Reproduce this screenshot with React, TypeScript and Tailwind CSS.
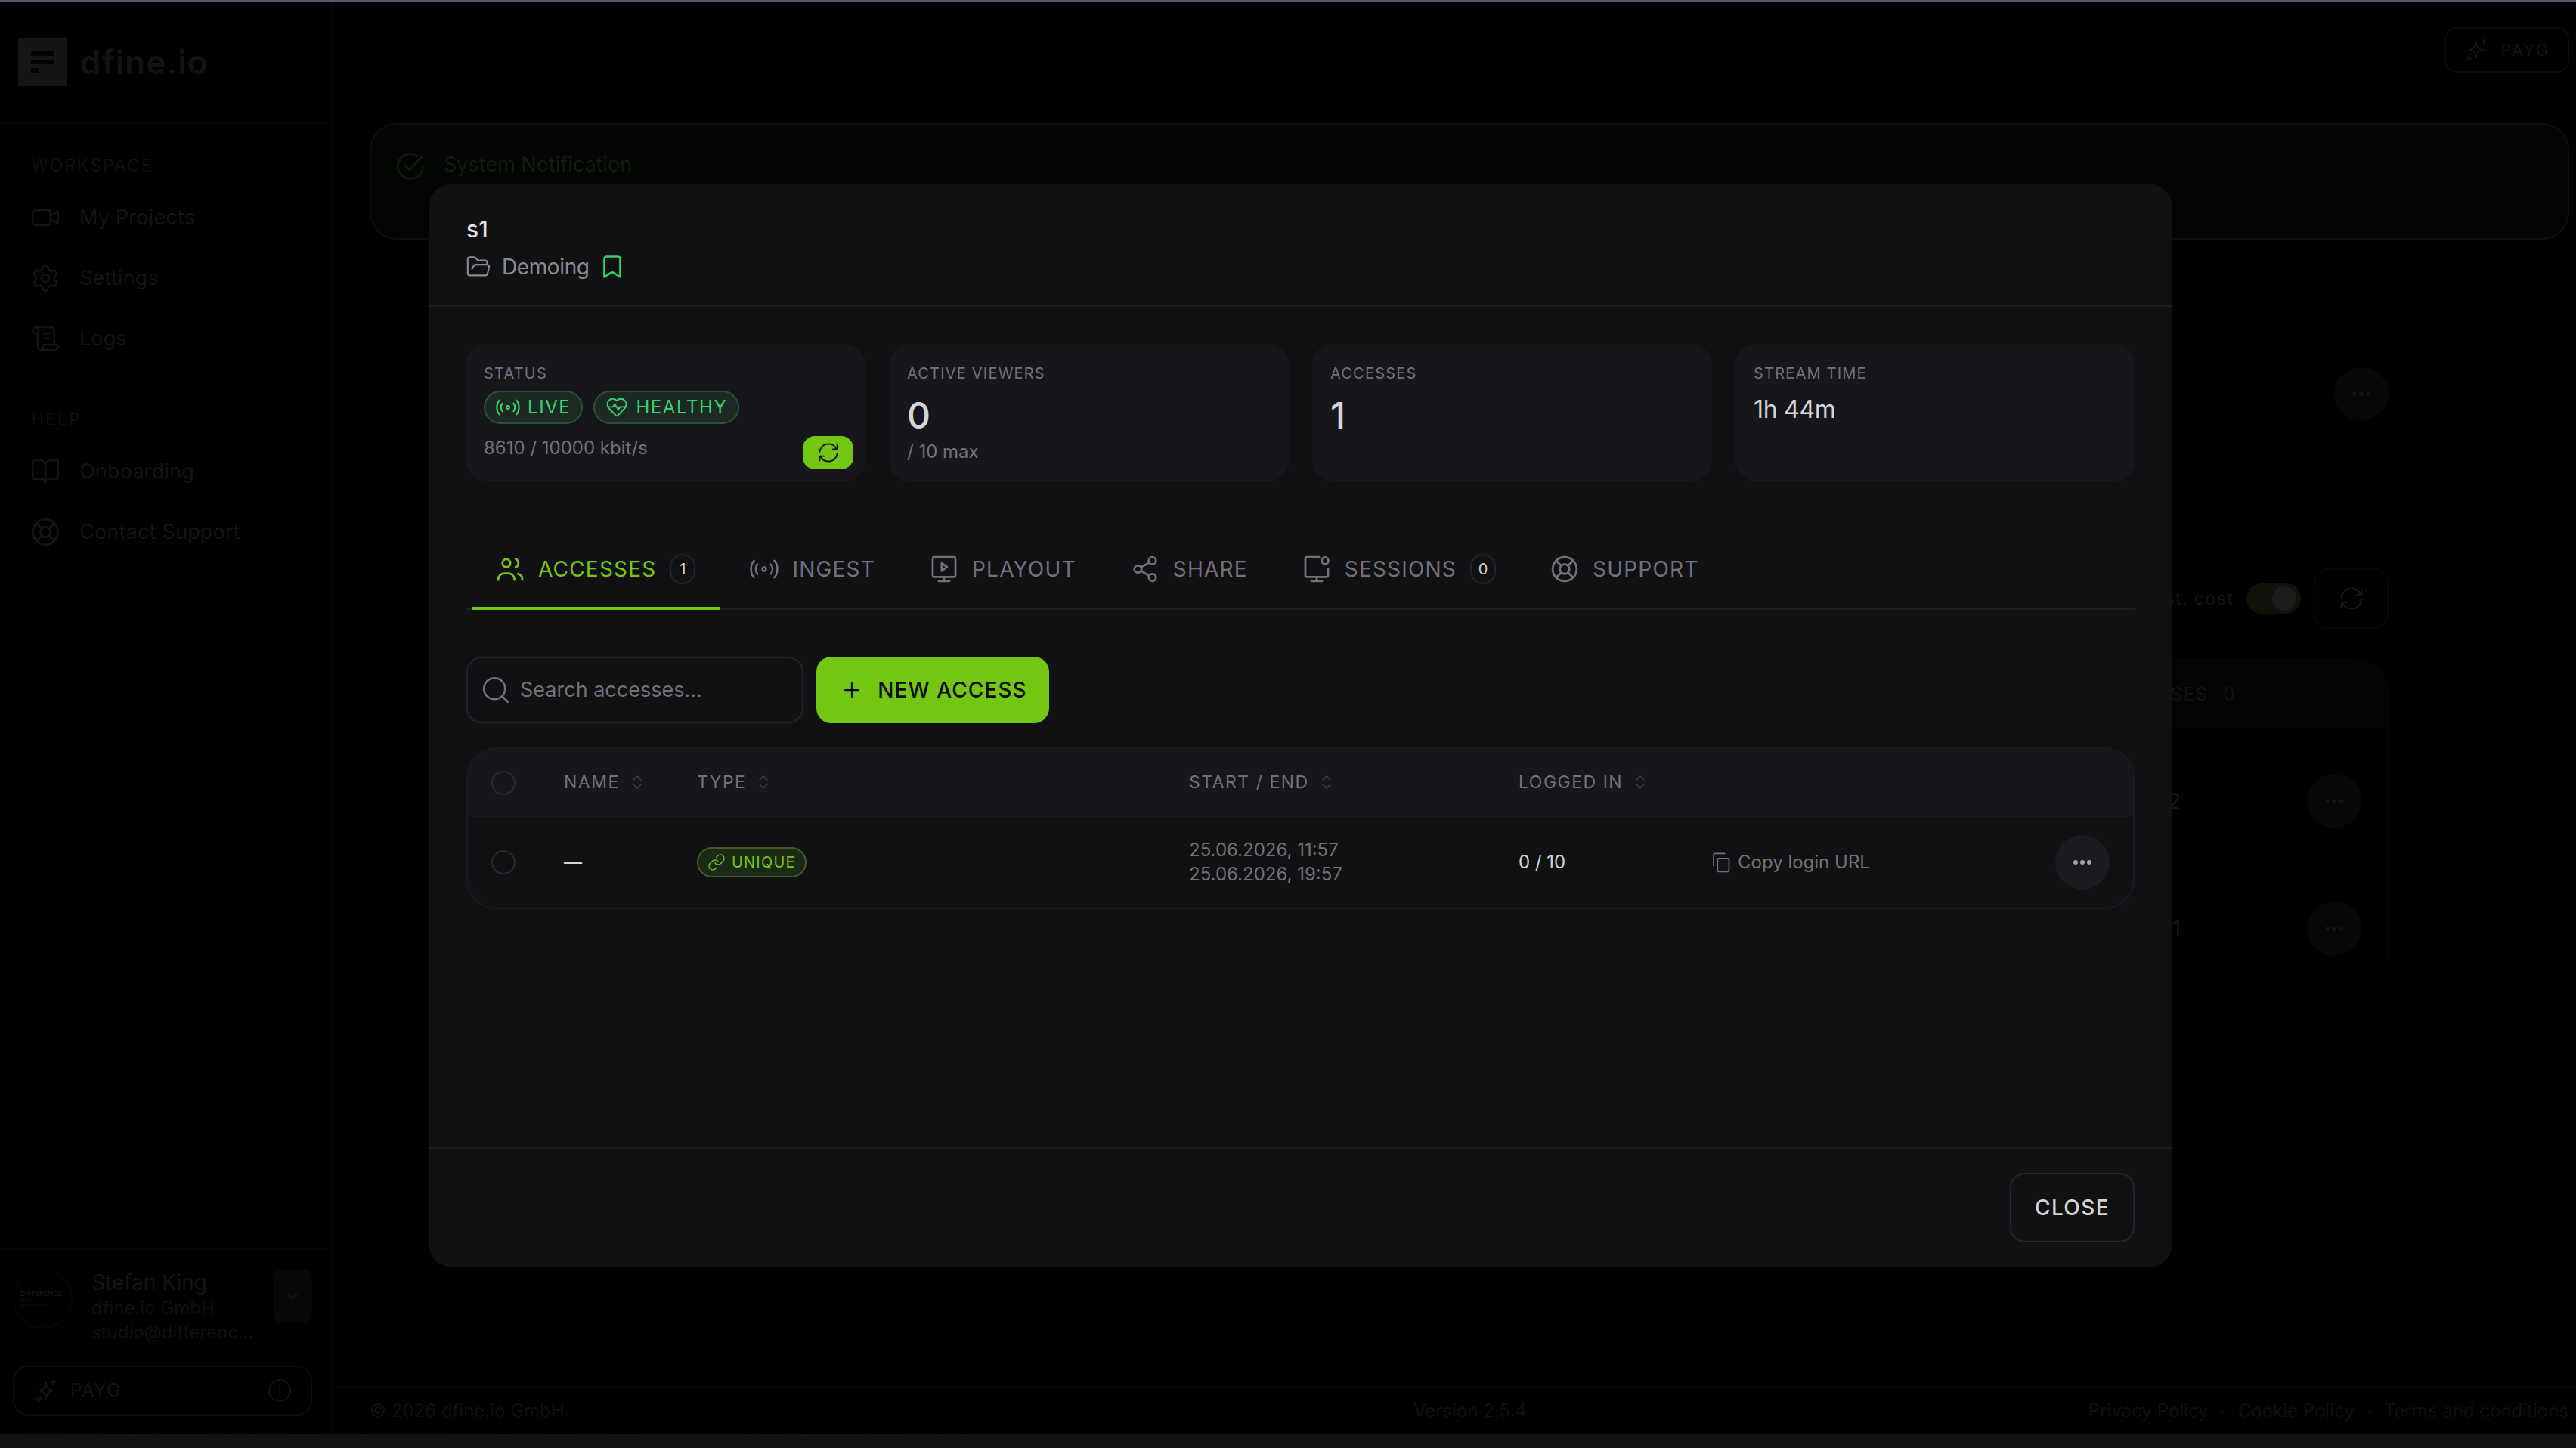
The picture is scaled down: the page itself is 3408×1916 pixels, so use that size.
import type { ReactNode } from "react";
import { BookOpen, ChevronDown, ChevronsUpDown, FolderOpen, Link, ScrollText, Settings, Video } from "lucide-react";

function Ico({ className, children, sw = 1.5 }: { className?: string; children: ReactNode; sw?: number }) {
  return (
    <svg viewBox="0 0 24 24" fill="none" stroke="currentColor" strokeWidth={sw} strokeLinecap="round" strokeLinejoin="round" className={className}>
      {children}
    </svg>
  );
}

const UsersIcon = ({ className }: { className?: string }) => (
  <Ico className={className} sw={1.75}>
    <circle cx="8.800" cy="7" r="3.300" />
    <path d="M16.500 3.500a3.800 3.800 0 0 1 0 7" />
    <path d="M2 21v-.5a5 5 0 0 1 5-5h3.500a5 5 0 0 1 5 5v.5" />
    <path d="M18.500 16a4.200 4.200 0 0 1 3.500 5" />
  </Ico>
);
const AntennaIcon = ({ className }: { className?: string }) => (
  <Ico className={className} sw={1.6}>
    <path d="M17.500 8s1.500 1.500 1.500 4-1.500 4-1.500 4" />
    <path d="M20.500 5s2.500 2.500 2.500 7-2.500 7-2.500 7" />
    <path d="M6.500 8S5 9.500 5 12s1.500 4 1.500 4" />
    <path d="M3.500 5S1 7.500 1 12s2.500 7 2.500 7" />
    <circle cx="12" cy="12" r="1.500" />
  </Ico>
);
const PlayoutIcon = ({ className }: { className?: string }) => (
  <Ico className={className} sw={1.75}>
    <rect x="2.500" y="2" width="19" height="16.500" rx="1.500" />
    <path d="M12 18.500v3M7.500 22h9" />
    <path d="M10 7v6.500l4.500-3.250z" />
  </Ico>
);
const ShareIcon = ({ className }: { className?: string }) => (
  <Ico className={className} sw={1.75}>
    <circle cx="18" cy="19" r="3" />
    <circle cx="18" cy="5" r="3" />
    <circle cx="6" cy="12" r="3" />
    <path d="M15.500 6.500l-7 4M8.500 13.500l7 4" />
  </Ico>
);
const SessionsIcon = ({ className }: { className?: string }) => (
  <Ico className={className} sw={1.75}>
    <path d="M14 2H4a1.500 1.500 0 0 0-1.500 1.500v13.500A1.500 1.500 0 0 0 4 18.500h16a1.500 1.500 0 0 0 1.500-1.500v-5" />
    <circle cx="19" cy="5" r="2.800" />
    <path d="M12 18.500v3M7.500 22h9" />
  </Ico>
);
const LifebeltIcon = ({ className }: { className?: string }) => (
  <Ico className={className} sw={1.75}>
    <circle cx="12" cy="12" r="10" />
    <circle cx="12" cy="12" r="4" />
    <path d="M9.200 9.200L4.900 4.900M14.800 9.200l4.300-4.300M9.200 14.800l-4.300 4.300M14.800 14.800l4.300 4.300" />
  </Ico>
);
const RefreshIcon = ({ className }: { className?: string }) => (
  <Ico className={className}>
    <path d="M21.170 8A10 10 0 0 0 12 2a10 10 0 0 0-9.950 9" />
    <path d="M17 8h4.400a.6.6 0 0 0 .6-.6V3" />
    <path d="M2.880 16a10 10 0 0 0 9.170 6A10 10 0 0 0 22 13" />
    <path d="M7.050 16H2.650a.6.6 0 0 0-.6.6V21" />
  </Ico>
);
const HeartPulseIcon = ({ className }: { className?: string }) => (
  <Ico className={className}>
    <path d="M22 8.860c0 1.550-.6 3.030-1.650 4.130-2.450 2.530-4.810 5.170-7.340 7.610-.58.55-1.500.53-2.060-.05L3.650 12.990c-2.200-2.280-2.200-5.970 0-8.260 2.230-2.310 5.860-2.310 8.080 0l.27.28.26-.28C13.330 3.620 14.790 3 16.310 3s2.970.62 4.040 1.730C21.410 5.830 22 7.320 22 8.860z" />
    <path d="M2.500 11.500H8l2-3 3.500 6 2-3h6" />
  </Ico>
);
const SparksIcon = ({ className }: { className?: string }) => (
  <Ico className={className}>
    <path d="M12 4c0 5 2.500 7.500 7 8-4.500.5-7 3-7 8-.5-5-3-7.500-7-8 4-.5 6.500-3 7-8z" />
    <path d="M19.500 2v4M17.500 4h4" />
    <circle cx="5" cy="20.500" r="1.600" />
  </Ico>
);
const CopyIcon = ({ className }: { className?: string }) => (
  <Ico className={className}>
    <rect x="8" y="7.500" width="13" height="15" rx="1.500" />
    <path d="M3.500 16V3.500a1.500 1.500 0 0 1 1.500-1.500h11" />
  </Ico>
);

const tabs = [
  { label: "ACCESSES", icon: UsersIcon, count: "1", active: true },
  { label: "INGEST", icon: AntennaIcon },
  { label: "PLAYOUT", icon: PlayoutIcon },
  { label: "SHARE", icon: ShareIcon },
  { label: "SESSIONS", icon: SessionsIcon, count: "0" },
  { label: "SUPPORT", icon: LifebeltIcon },
];

const Dots = ({ color }: { color: string }) => (
  <span className={`flex gap-[3px] ${color}`}>
    <span className="w-[6px] h-[6px] rounded-full bg-current" />
    <span className="w-[6px] h-[6px] rounded-full bg-current" />
    <span className="w-[6px] h-[6px] rounded-full bg-current" />
  </span>
);

function NavItem({ icon, label }: { icon: ReactNode; label: string }) {
  return (
    <div className="h-[80px] flex items-center gap-[25px] pl-[40px] text-[27px] tracking-[0.2px] text-[#141414]">
      {icon}
      <span>{label}</span>
    </div>
  );
}

function Sidebar() {
  return (
    <aside className="w-[440px] shrink-0 flex flex-col border-r-2 border-[#050505]">
      <div className="h-[162px] border-b-2 border-[#050505] flex items-start pl-[24px] pt-[48px] gap-[18px]">
        <div className="w-[64px] h-[64px] bg-[#141516] flex flex-col gap-[5px] items-start justify-center pl-[17px]">
          <span className="w-[30px] h-[6px] bg-[#030303]" />
          <span className="w-[30px] h-[6px] bg-[#030303]" />
          <span className="w-[10px] h-[6px] bg-[#030303]" />
        </div>
        <span className="text-[44px] leading-[64px] font-semibold text-[#131313] tracking-[1px]">dfine.io</span>
      </div>
      <div className="pt-[39px]">
        <div className="pl-[41px] text-[23px] leading-[32px] tracking-[2px] text-[#101010]">WORKSPACE</div>
        <div className="mt-[13px]">
          <NavItem icon={<Video className="w-[40px] h-[40px]" strokeWidth={1.5} />} label="My Projects" />
          <NavItem icon={<Settings className="w-[40px] h-[40px]" strokeWidth={1.5} />} label="Settings" />
          <NavItem icon={<ScrollText className="w-[40px] h-[40px]" strokeWidth={1.5} />} label="Logs" />
        </div>
        <div className="mt-[51px] pl-[41px] text-[23px] leading-[32px] tracking-[2px] text-[#101010]">HELP</div>
        <div className="mt-[13px]">
          <NavItem icon={<BookOpen className="w-[40px] h-[40px]" strokeWidth={1.5} />} label="Onboarding" />
          <NavItem icon={<LifebeltIcon className="w-[40px] h-[40px]" />} label="Contact Support" />
        </div>
      </div>
      <div className="mt-auto border-t-2 border-[#050505] pt-[25px] pl-[17px] pr-[25px] pb-[25px]">
        <div className="flex items-start">
          <div className="w-[79px] h-[79px] shrink-0 rounded-full border-2 border-[#060606] flex flex-col items-start justify-center pl-[8px] text-[#1a1a1a]">
            <span className="text-[9px] leading-[12px]">DIFFERENCE</span>
            <span className="text-[5px] leading-[7px] text-[#111111]">DIGITAL</span>
            <span className="text-[5px] leading-[7px] text-[#111111]">INTERMEDIATE</span>
          </div>
          <div className="ml-[25px] w-[200px] text-[#151515]">
            <div className="text-[28px] leading-[36px]">Stefan King</div>
            <div className="text-[24px] leading-[32px] text-[#101010]">dfine.io GmbH</div>
            <div className="text-[24px] leading-[32px] text-[#101010] whitespace-nowrap">studio@differenc...</div>
          </div>
          <div className="ml-auto w-[52px] h-[71px] rounded-[12px] bg-[#07080a] flex items-center justify-center text-[#151515]">
            <ChevronDown className="w-[24px] h-[24px]" />
          </div>
        </div>
        <div className="mt-[28px] h-[66px] rounded-[20px] border-2 border-[#0c0d06] flex items-center pl-[26px] pr-[26px] text-[#14160a]">
          <SparksIcon className="w-[32px] h-[32px]" />
          <span className="ml-[16px] text-[24px] tracking-[1.5px]">PAYG</span>
          <span className="ml-auto w-[30px] h-[30px] rounded-full border-2 border-current flex items-center justify-center text-[18px]">i</span>
        </div>
      </div>
    </aside>
  );
}

function Background() {
  return (
    <div className="h-[1896px] flex">
      <Sidebar />
      <main className="flex-1 min-w-0 flex flex-col">
        <header className="h-[128px] shrink-0 border-b-2 border-[#050505] flex justify-end pr-[9px] pt-[34px]">
          <div className="w-[165px] h-[60px] rounded-[16px] border-2 border-[#0c0d06] flex items-center justify-center gap-[16px] text-[#14160a]">
            <SparksIcon className="w-[32px] h-[32px]" />
            <span className="text-[22px] tracking-[2px]">PAYG</span>
          </div>
        </header>
        <div className="flex-1 min-h-0 pl-[49px] pr-[9px] pt-[33px]">
          <div className="h-[154px] rounded-[36px] border-2 border-[#0a120a] bg-[#020502] pt-[33px] pl-[30px] flex items-start gap-[22px]">
            <svg viewBox="0 0 24 24" fill="none" stroke="#0f1a0f" strokeWidth="1.5" strokeLinecap="round" strokeLinejoin="round" className="w-[44px] h-[44px]">
              <path d="M21 12a9 9 0 1 1-4-7.500" />
              <path d="M8 11.500l3 3 9-9" />
            </svg>
            <span className="text-[27px] leading-[40px] text-[#121c12]">System Notification</span>
          </div>
          <div className="pr-[239px]">
            <div className="mt-[169px] flex justify-end">
              <div className="w-[72px] h-[70px] rounded-full bg-[#070707] flex items-center justify-center">
                <Dots color="text-[#131313]" />
              </div>
            </div>
            <div className="mt-[196px] flex items-center justify-end gap-[17px]">
              <span className="text-[24px] tracking-[1px] text-[#141414]">Est. cost</span>
              <div className="w-[72px] h-[40px] rounded-full bg-[#101208] flex items-center justify-end pr-[6px]">
                <span className="w-[32px] h-[32px] rounded-full bg-[#1c1c1c]" />
              </div>
              <div className="w-[99px] h-[80px] rounded-[20px] border-2 border-[#070707] flex items-center justify-center text-[#1a1a1a]">
                <RefreshIcon className="w-[32px] h-[32px]" />
              </div>
            </div>
            <div className="mt-[39px] ml-[1200px] h-[429px] rounded-r-[40px] border-2 border-l-0 border-[#040404] overflow-hidden">
              <div className="h-[91px] bg-[#040404] flex items-center justify-end gap-[20px] pr-[200px] text-[24px] tracking-[1.5px] text-[#121212]">
                <span>ACCESSES</span>
                <span>0</span>
              </div>
              <div className="h-[193px] border-b-2 border-[#040404] flex items-center justify-end gap-[167px] pr-[34px]">
                <span className="text-[28px] text-[#161616]">2</span>
                <div className="w-[72px] h-[72px] rounded-full bg-[#070707] flex items-center justify-center"><Dots color="text-[#131313]" /></div>
              </div>
              <div className="h-[143px] flex items-center justify-end gap-[167px] pr-[34px]">
                <span className="text-[28px] text-[#161616]">1</span>
                <div className="w-[72px] h-[72px] rounded-full bg-[#070707] flex items-center justify-center"><Dots color="text-[#131313]" /></div>
              </div>
            </div>
          </div>
        </div>
        <footer className="h-[64px] shrink-0 border-t-2 border-[#050505] flex items-center pl-[49px] pr-[10px] text-[24px] text-[#101010]">
          <span className="w-[1381px]">© 2026 dfine.io GmbH</span>
          <span>Version 2.5.4</span>
          <span className="ml-auto flex gap-[14px]">
            <span>Privacy Policy</span>
            <span>-</span>
            <span>Cookie Policy</span>
            <span>-</span>
            <span>Terms and conditions</span>
          </span>
        </footer>
      </main>
    </div>
  );
}

function StatCard({ label, children, rightPad }: { label: string; children: ReactNode; rightPad?: boolean }) {
  return (
    <div className={`h-[182px] rounded-[28px] bg-[#17171b] pt-[25px] pl-[24px] ${rightPad ? "pr-[16px]" : "pr-[24px]"}`}>
      <div className="text-[20px] leading-[28px] tracking-[1.2px] text-[#71717a]">{label}</div>
      {children}
    </div>
  );
}

function Badge({ icon, label }: { icon: ReactNode; label: string }) {
  return (
    <span className="h-[44px] px-[14px] rounded-full bg-[#1c2a23] border-2 border-[#2b5238] flex items-center gap-[10px] text-[24px] tracking-[1.6px] text-[#3ed070]">
      {icon}
      {label}
    </span>
  );
}

function HeadCell({ label }: { label: string }) {
  return (
    <div className="flex items-center gap-[11px] text-[23px] tracking-[1.5px] text-[#71717a] pb-[2px]">
      {label}
      <ChevronsUpDown className="w-[24px] h-[24px] text-[#3f3f46]" strokeWidth={1.25} />
    </div>
  );
}

const Radio = () => <span className="block w-[32px] h-[32px] rounded-full border-2 border-[#2a2a2f]" />;

function Modal() {
  return (
    <div className="absolute left-[567px] top-[243px] w-[2307px] h-[1434px] rounded-[32px] bg-[#111114] flex flex-col text-[#d4d4d8]">
      <div className="h-[163px] shrink-0 border-b-2 border-[#1d1d21] pt-[40px] pl-[50px]">
        <div className="text-[30px] leading-[40px] font-medium text-[#e4e4e7]">s1</div>
        <div className="mt-[10px] h-[40px] flex items-center text-[28px] tracking-[-0.4px] text-[#8a8a93]">
          <FolderOpen className="-ml-[1px] w-[34px] h-[34px]" strokeWidth={1.5} />
          <span className="ml-[14px]">Demoing</span>
          <svg viewBox="0 0 24 24" fill="none" stroke="#2fd566" strokeWidth="1.75" strokeLinejoin="round" className="ml-[12px] w-[36px] h-[36px]">
            <path d="M5 21V5a2 2 0 0 1 2-2h10a2 2 0 0 1 2 2v16l-5.900-3.800a2 2 0 0 0-2.200 0L5 21z" />
          </svg>
        </div>
      </div>
      <div className="flex-1 min-h-0 px-[50px] pt-[49px]">
        <div className="grid grid-cols-4 gap-[31px] -mx-[1px]">
          <StatCard label="STATUS" rightPad>
            <div className="mt-[9px] flex gap-[14px]">
              <Badge icon={<AntennaIcon className="w-[32px] h-[32px]" />} label="LIVE" />
              <Badge icon={<HeartPulseIcon className="w-[30px] h-[30px]" />} label="HEALTHY" />
            </div>
            <div className="mt-[16px] flex items-start justify-between">
              <span className="text-[24px] leading-[32px] text-[#71717a]">8610 / 10000 kbit/s</span>
              <span className="w-[67px] h-[44px] rounded-[16px] bg-[#73c712] flex items-center justify-center text-[#0a0a0a]">
                <RefreshIcon className="w-[28px] h-[28px]" />
              </span>
            </div>
          </StatCard>
          <StatCard label="ACTIVE VIEWERS">
            <div className="mt-[14px] text-[48px] leading-[56px] font-medium">0</div>
            <div className="mt-[4px] text-[24px] leading-[32px] text-[#71717a]">/ 10 max</div>
          </StatCard>
          <StatCard label="ACCESSES">
            <div className="mt-[14px] text-[48px] leading-[56px] font-medium">1</div>
          </StatCard>
          <StatCard label="STREAM TIME">
            <div className="mt-[14px] text-[32px] leading-[40px] tracking-[-0.3px]">1h 44m</div>
          </StatCard>
        </div>

        <div className="mt-[65px] h-[105px] -mx-[1px] border-b-2 border-[#1d1d21] pl-[8px] flex gap-[8px]">
          {tabs.map(({ label, icon: Icon, count, active }) => (
            <div
              key={label}
              className={
                active
                  ? "h-[105px] px-[32px] flex items-center gap-[18px] border-b-4 border-[#73c712] text-[#73c712]"
                  : "h-[105px] px-[32px] flex items-center gap-[18px] border-b-4 border-transparent text-[#71717a]"
              }
            >
              <Icon className="w-[38px] h-[38px] shrink-0" />
              <span className="text-[28px] tracking-[1.2px]">{label}</span>
              {count && (
                <span className="w-[34px] h-[40px] rounded-full border-2 border-[#232327] flex items-center justify-center text-[20px] text-[#d4d4d8]">
                  {count}
                </span>
              )}
            </div>
          ))}
        </div>

        <div className="mt-[62px] flex gap-[17px]">
          <div className="w-[446px] h-[88px] rounded-[20px] border-2 border-[#232327] pl-[16px] flex items-center gap-[11px] text-[27px] text-[#71717a]">
            <Ico className="w-[42px] h-[42px]">
              <path d="M17 17l4 4" />
              <path d="M3 11a8 8 0 0 0 16 0 8 8 0 0 0-16 0z" />
            </Ico>
            <span>Search accesses...</span>
          </div>
          <div className="w-[308px] h-[88px] rounded-[20px] bg-[#73c712] flex items-center justify-center gap-[16px] text-[28px] font-medium tracking-[1.1px] text-[#0a0a0a]">
            <Ico className="w-[36px] h-[36px]">
              <path d="M6 12h12M12 6v12" />
            </Ico>
            NEW ACCESS
          </div>
        </div>

        <div className="mt-[32px] rounded-[40px] border-2 border-[#1b1b1f] overflow-hidden">
          <div className="h-[90px] bg-[#17171b] grid grid-cols-[127px_176px_651px_436px_1fr] items-center">
            <div className="pl-[31px]"><Radio /></div>
            <HeadCell label="NAME" />
            <HeadCell label="TYPE" />
            <HeadCell label="START / END" />
            <HeadCell label="LOGGED IN" />
          </div>
          <div className="h-[120px] grid grid-cols-[127px_176px_651px_436px_254px_1fr_auto] items-center">
            <div className="pl-[31px]"><Radio /></div>
            <div className="text-[24px]">—</div>
            <div>
              <span className="inline-flex h-[40px] px-[12px] rounded-full bg-[#1c2914] border-2 border-[#3e5f23] items-center gap-[8px] text-[20px] tracking-[1.2px] text-[#73c712]">
                <Link className="w-[24px] h-[24px]" strokeWidth={1.5} />
                UNIQUE
              </span>
            </div>
            <div className="text-[24px] leading-[32px] text-[#71717a]">
              <div>25.06.2026, 11:57</div>
              <div>25.06.2026, 19:57</div>
            </div>
            <div className="text-[24px]">0 / 10</div>
            <div className="flex items-center gap-[8px] text-[24px] text-[#71717a]">
              <CopyIcon className="w-[28px] h-[28px]" />
              Copy login URL
            </div>
            <div className="pr-[31px]">
              <span className="w-[72px] h-[72px] rounded-full bg-[#1b1b1f] flex items-center justify-center">
                <Dots color="text-[#a1a1aa]" />
              </span>
            </div>
          </div>
        </div>
      </div>
      <div className="h-[159px] shrink-0 border-t-2 border-[#1d1d21] pt-[32px] pr-[50px] flex justify-end items-start">
        <div className="w-[165px] h-[92px] rounded-[20px] border-2 border-[#26262a] flex items-center justify-center text-[28px] font-medium tracking-[1.4px]">
          CLOSE
        </div>
      </div>
    </div>
  );
}

export default function App() {
  return (
    <div className="relative h-[1916px] overflow-hidden bg-black font-[Inter,sans-serif]">
      <div className="h-[2px] bg-[#525b65]" />
      <Background />
      <div className="h-[18px] bg-gradient-to-r from-[#0e1418] via-[#14120f] to-[#101216]" />
      <Modal />
    </div>
  );
}
